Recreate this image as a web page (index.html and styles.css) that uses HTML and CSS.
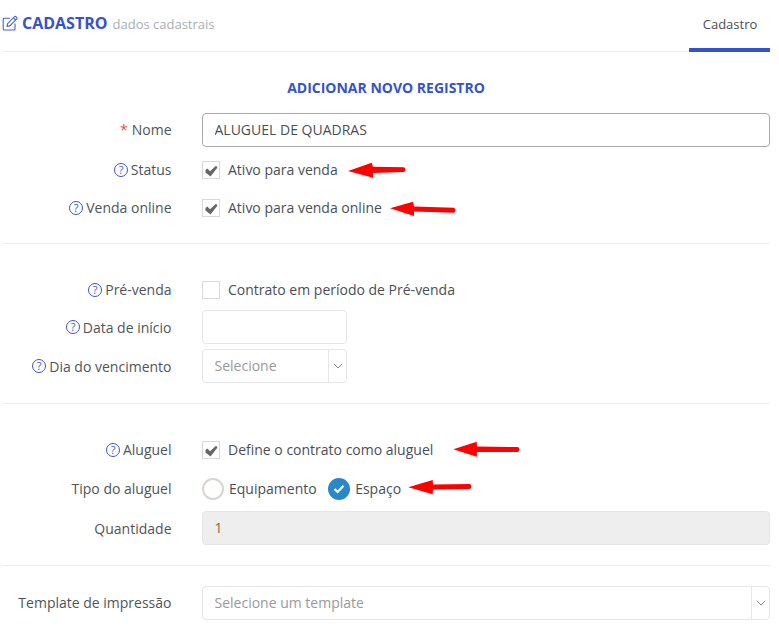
FILE: index.html
```html
<!DOCTYPE html>
<html lang="pt-BR">
<head>
<meta charset="utf-8">
<title>Cadastro</title>
<link rel="stylesheet" href="styles.css">
</head>
<body>
<div class="page">
  <header class="header">
    <div class="title">
      <svg class="title-icon" width="16" height="16" viewBox="0 0 16 16" fill="none" stroke="currentColor" stroke-width="1.1">
        <path d="M13 8.6V14a1 1 0 0 1-1 1H2.200a1 1 0 0 1-1-1V4.200a1 1 0 0 1 1-1H8"/>
        <path d="M5.600 8.700 12.600 1.700a.9.9 0 0 1 1.300 0l.9.9a.9.9 0 0 1 0 1.300l-7 7-2.700.5z"/>
        <path d="M11.500 2.800l2.200 2.200"/>
      </svg>
      <span class="title-main">CADASTRO</span>
      <span class="title-sub">dados cadastrais</span>
    </div>
    <div class="tab">Cadastro</div>
  </header>

  <h2 class="form-title">ADICIONAR NOVO REGISTRO</h2>

  <form class="form">
    <div class="row">
      <div class="label"><span class="req">*</span> Nome</div>
      <input class="input" type="text" value="ALUGUEL DE QUADRAS">
    </div>
    <div class="row mt6">
      <div class="label"><svg class="help" viewBox="0 0 14 14"><circle cx="7" cy="7" r="6.500"/><text x="7" y="10.800">?</text></svg>Status</div>
      <label class="check"><span class="box"><svg viewBox="0 0 16 16"><path d="M2.500 8 4.300 6.500 7 9.300 13 3.800 14.500 5.500 7.500 14.500 2.500 10.500z"/></svg></span>Ativo para venda</label>
    </div>
    <div class="row mt4">
      <div class="label"><svg class="help" viewBox="0 0 14 14"><circle cx="7" cy="7" r="6.500"/><text x="7" y="10.800">?</text></svg>Venda online</div>
      <label class="check"><span class="box"><svg viewBox="0 0 16 16"><path d="M2.500 8 4.300 6.500 7 9.300 13 3.800 14.500 5.500 7.500 14.500 2.500 10.500z"/></svg></span>Ativo para venda online</label>
    </div>

    <hr class="rule rule-a">

    <div class="row">
      <div class="label"><svg class="help" viewBox="0 0 14 14"><circle cx="7" cy="7" r="6.500"/><text x="7" y="10.800">?</text></svg>Pré-venda</div>
      <label class="check"><span class="box"></span>Contrato em período de Pré-venda</label>
    </div>
    <div class="row mt3">
      <div class="label label-low"><svg class="help" viewBox="0 0 14 14"><circle cx="7" cy="7" r="6.500"/><text x="7" y="10.800">?</text></svg>Data de início</div>
      <input class="input input-light short" type="text">
    </div>
    <div class="row mt5">
      <div class="label label-low"><svg class="help" viewBox="0 0 14 14"><circle cx="7" cy="7" r="6.500"/><text x="7" y="10.800">?</text></svg>Dia do vencimento</div>
      <div class="select short">
        <span class="select-text">Selecione</span>
        <span class="select-btn"><svg width="10" height="6" viewBox="0 0 10 6"><path d="M.8.8 5 5 9.200.8"/></svg></span>
      </div>
    </div>

    <hr class="rule rule-b">

    <div class="row">
      <div class="label"><svg class="help" viewBox="0 0 14 14"><circle cx="7" cy="7" r="6.500"/><text x="7" y="10.800">?</text></svg>Aluguel</div>
      <label class="check"><span class="box"><svg viewBox="0 0 16 16"><path d="M2.500 8 4.300 6.500 7 9.300 13 3.800 14.500 5.500 7.500 14.500 2.500 10.500z"/></svg></span>Define o contrato como aluguel</label>
    </div>
    <div class="row mt5">
      <div class="label">Tipo do aluguel</div>
      <div class="radios">
        <label class="radio"><span class="dot"></span>Equipamento</label>
        <label class="radio"><span class="dot on"><svg width="12" height="10" viewBox="0 0 12 10"><path d="M1.500 5 4.600 8 10.500 1.800"/></svg></span>Espaço</label>
      </div>
    </div>
    <div class="row mt5">
      <div class="label label-low">Quantidade</div>
      <div class="input readonly">1</div>
    </div>

    <hr class="rule rule-c">

    <div class="row">
      <div class="label">Template de impressão</div>
      <div class="select">
        <span class="select-text">Selecione um template</span>
        <span class="select-btn"><svg width="10" height="6" viewBox="0 0 10 6"><path d="M.8.8 5 5 9.200.8"/></svg></span>
      </div>
    </div>
  </form>

  <svg class="arrows" width="779" height="638" viewBox="0 0 779 638" fill="#f00">
    <path d="M348 171 L371.700 162.700 L373 166.700 L404 167.300 Q407 169.700 404 172 L373 173 L373 177.700 Z"/>
    <path d="M390 208.300 L413 201.700 L414 206.500 L454 207.700 Q457 210.200 454 212.700 L414 211.500 L414 216 Z"/>
    <path d="M453.300 449.300 L476.700 441.700 L477 446.500 L518 447 Q521 449.500 518 452 L477 452 L476.700 456.700 Z"/>
    <path d="M408.300 487.300 L432.700 480 L433 484.500 L470 484 Q473 486.500 470 489 L433 489.500 L432.700 494.300 Z"/>
  </svg>
</div>
</body>
</html>
```

FILE: styles.css
```css
* { box-sizing: border-box; }
html, body { margin: 0; padding: 0; background: #fff; }
body { font-family: "Open Sans", sans-serif; font-size: 14px; color: #4a4f55; overflow: hidden; }
.page { position: relative; width: 779px; height: 638px; padding: 0 9px 0 2px; overflow: hidden; }

.header { display: flex; justify-content: space-between; height: 52px; border-bottom: 1px solid #eceef0; }
.title { display: flex; align-items: center; height: 46px; color: #3a57c9; }
.title-icon { margin-right: 4px; color: #4a63cc; }
.title-main { font-size: 16px; font-weight: 700; color: #3453c9; }
.title-sub { font-size: 13px; color: #a8aeb6; margin-left: 5px; padding-top: 2px; }
.tab { width: 81px; height: 52px; padding-left: 1px; text-align: center; font-size: 13px; line-height: 48px; color: #4a4f55; border-bottom: 4px solid #3453c9; }

.form-title { margin: 0; height: 61px; padding-top: 26px; text-align: center; font-size: 14px; line-height: 20px; font-weight: 700; color: #3453c9; }

.form { display: block; }
.row { display: flex; align-items: center; min-height: 34px; }
.mt3 { margin-top: 3px; }
.mt4 { margin-top: 4px; }
.mt5 { margin-top: 5px; }
.mt6 { margin-top: 6px; }
.label { display: flex; align-items: center; justify-content: flex-end; width: 170px; margin-right: 30px; padding-right: 0.5px; padding-bottom: 2px; text-align: right; white-space: nowrap; color: #4f545a; }
.label-low { padding-bottom: 0; }
.req { color: #d9534f; margin-right: 4px; }
.help { width: 14px; height: 14px; margin-right: 3px; margin-top: 2px; }
.label-low .help { margin-top: 0; }
.help circle { fill: none; stroke: #3a57c9; stroke-width: 1; }
.help text { font-family: "Open Sans", sans-serif; font-size: 11px; fill: #3a57c9; text-anchor: middle; }

.input { flex: 1; height: 34px; border: 1px solid #a9a9a9; border-radius: 4px; padding: 0 11.5px 2px; font: 14px "Open Sans", sans-serif; color: #4a4f55; outline: none; display: block; background: #fff; }
.input-light { border-color: #e5e6e7; }
.readonly { display: flex; align-items: center; background: #eeeeee; border-color: #e5e6e7; color: #8a6a3a; }

.check { display: flex; align-items: center; padding-bottom: 2px; color: #4a4f55; }
.box { display: flex; width: 18px; height: 18px; border: 1px solid #d9d9d9; margin-top: 2px; margin-right: 8px; background: #fff; }
.box svg { width: 16px; height: 16px; }
.box path { fill: #666; }

.radios { display: flex; align-items: center; gap: 11.5px; }
.radio { display: flex; align-items: center; padding-bottom: 2px; }
.dot { display: flex; align-items: center; justify-content: center; width: 22px; height: 22px; border: 2px solid #d8d5d2; border-radius: 50%; margin-top: 2px; margin-right: 5px; background: #fff; }
.dot.on { background: #2a88c8; border-color: #2a88c8; }
.dot path { fill: none; stroke: #fff; stroke-width: 2.200; }

.select { flex: 1; display: flex; height: 34px; border: 1px solid #e5e6e7; border-radius: 4px; background: #fff; }
.select-text { flex: 1; padding-left: 11.5px; line-height: 31px; color: #999; }
.select-btn { display: flex; align-items: center; justify-content: center; width: 18px; border-left: 1px solid #e5e6e7; }
.select-btn path { fill: none; stroke: #888; stroke-width: 1; }
.short { flex: none; width: 145px; }

.rule { border: 0; border-top: 1px solid #eceef0; margin: 0; }
.rule-a { margin: 18px 0 29px; }
.rule-b { margin: 20px 0 29px; }
.rule-c { margin: 20px 0 20px; }

.arrows { position: absolute; left: 0; top: 0; pointer-events: none; }
```
